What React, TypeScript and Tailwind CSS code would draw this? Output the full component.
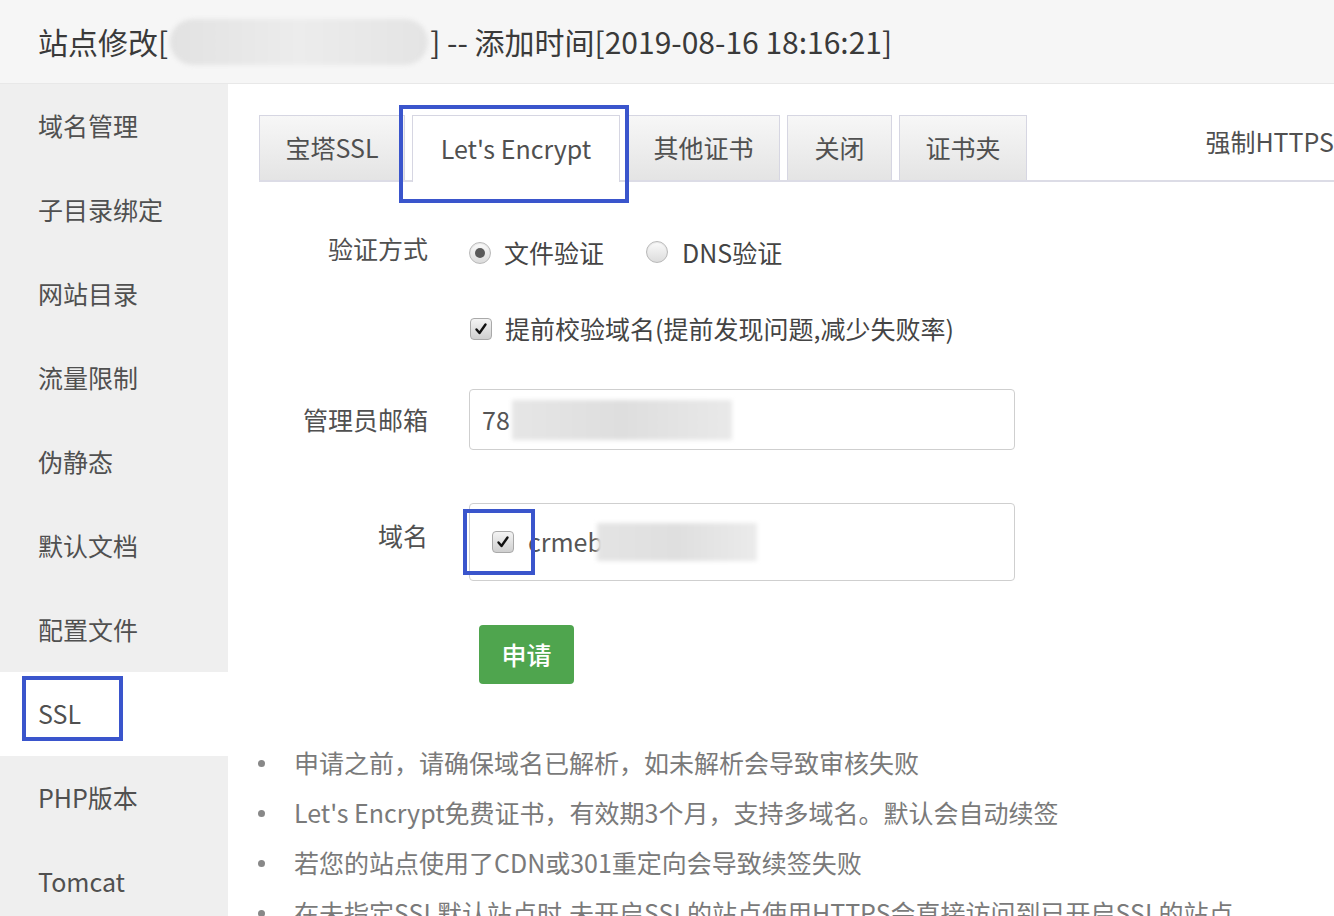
import React from "react";

const font = { fontFamily: '"Noto Sans CJK SC", "Noto Sans", sans-serif' };

function Radio({ checked }: { checked: boolean }) {
  return (
    <span className="relative inline-flex h-[22px] w-[22px] items-center justify-center rounded-full border border-[#b9b9b9] bg-gradient-to-b from-[#fbfbfb] to-[#dcdcdc] shadow-[inset_0_1px_1px_rgba(0,0,0,0.08)]">
      {checked && <span className="h-[10px] w-[10px] rounded-full bg-[#5a5a5a]" />}
    </span>
  );
}

function Check() {
  return (
    <span className="inline-flex h-[22px] w-[22px] items-center justify-center rounded-[4px] border border-[#a9a9a9] bg-gradient-to-b from-[#f4f4f4] to-[#cfcfcf]">
      <svg width="14" height="14" viewBox="0 0 14 14">
        <path d="M2.5 7.5 L5.5 11 L11.5 2.5" fill="none" stroke="#111" strokeWidth="2.4" strokeLinecap="round" strokeLinejoin="round" />
      </svg>
    </span>
  );
}

const sideItems = ["域名管理", "子目录绑定", "网站目录", "流量限制", "伪静态", "默认文档", "配置文件", "SSL", "PHP版本", "Tomcat"];

const tabs = [
  { t: "宝塔SSL", w: "w-[146px]" },
  { t: "Let's Encrypt", w: "w-[208px]", active: true },
  { t: "其他证书", w: "w-[153px]" },
  { t: "关闭", w: "w-[105px]" },
  { t: "证书夹", w: "w-[128px]" },
];

const notes = [
  "申请之前，请确保域名已解析，如未解析会导致审核失败",
  "Let's Encrypt免费证书，有效期3个月，支持多域名。默认会自动续签",
  "若您的站点使用了CDN或301重定向会导致续签失败",
  "在未指定SSL默认站点时,未开启SSL的站点使用HTTPS会直接访问到已开启SSL的站点",
];

export default function App() {
  return (
    <div className="relative h-[916px] w-[1334px] overflow-hidden bg-white" style={font}>
      {/* header */}
      <div className="relative flex h-[84px] items-center border-b border-[#e8e8e8] bg-[#f6f6f6] pl-[38px] text-[30px] text-[#3a3a3a]">
        <span>站点修改[</span>
        <span className="mx-[2px] h-[46px] w-[258px] rounded-[23px] bg-gradient-to-r from-[#e2e2e2] via-[#ececec] to-[#e4e4e4] blur-[2px]" />
        <span>] -- 添加时间[2019-08-16 18:16:21]</span>
      </div>

      <div className="flex h-[832px]">
        {/* sidebar */}
        <div className="w-[228px] shrink-0 bg-[#efefef]">
          {sideItems.map((s) => (
            <div
              key={s}
              className={`flex h-[84px] items-center pl-[38px] text-[25px] text-[#505050] ${s === "SSL" ? "bg-white" : ""}`}
            >
              {s}
            </div>
          ))}
        </div>

        {/* main */}
        <div className="relative flex-1 pl-[31px] pt-[33px]">
          {/* tabs */}
          <div className="flex h-[65px] items-end border-b-2 border-[#dcdce6]">
            {tabs.map((t) => (
              <div
                key={t.t}
                className={`mr-[7px] flex h-[65px] items-center justify-center border border-b-0 border-[#d6d6e2] text-[25px] text-[#505050] ${t.w} ${
                  t.active ? "-mb-[2px] h-[67px] bg-white" : "bg-gradient-to-b from-[#f7f7f7] to-[#e4e4e4]"
                }`}
              >
                {t.t}
              </div>
            ))}
            <div className="ml-auto self-start pt-[6px] text-[25px] text-[#505050] whitespace-nowrap">强制HTTPS</div>
          </div>

          {/* form */}
          <div className="mt-[46px] flex items-start">
            <div className="w-[169px] text-right text-[25px] leading-[40px] text-[#505050]">验证方式</div>
            <div className="ml-[41px] flex h-[50px] items-center text-[25px] text-[#444]">
              <Radio checked />
              <span className="ml-[13px]">文件验证</span>
              <span className="ml-[42px]"><Radio checked={false} /></span>
              <span className="ml-[14px]">DNS验证</span>
            </div>
          </div>

          <div className="mt-[26px] flex items-center">
            <div className="w-[169px]" />
            <div className="ml-[42px] flex h-[50px] items-center text-[25px] text-[#444]">
              <Check />
              <span className="ml-[13px]">提前校验域名(提前发现问题,减少失败率)</span>
            </div>
          </div>

          <div className="mt-[35px] flex items-center">
            <div className="w-[169px] text-right text-[25px] text-[#505050]">管理员邮箱</div>
            <div className="relative ml-[41px] flex h-[61px] w-[546px] items-center rounded-[4px] border border-[#cfcfcf] pl-[12px] text-[25px] text-[#555]">
              <span>78</span>
              <span className="ml-[2px] h-[40px] w-[220px] bg-gradient-to-r from-[#e6e6e6] via-[#dedede] to-[#e9e9e9] blur-[2px]" />
            </div>
          </div>

          <div className="mt-[53px] flex items-start">
            <div className="w-[169px] pt-[12px] text-right text-[25px] leading-[40px] text-[#505050]">域名</div>
            <div className="ml-[41px] flex h-[78px] w-[546px] items-center rounded-[4px] border border-[#cfcfcf] pl-[22px] text-[25px] text-[#555]">
              <Check />
              <span className="ml-[14px]">crmeb</span>
              <span className="-ml-[6px] h-[38px] w-[160px] bg-gradient-to-r from-[#e4e4e4] via-[#dfdfdf] to-[#ebebeb] blur-[2px]" />
            </div>
          </div>

          <div className="mt-[44px] pl-[220px]">
            <button className="flex h-[59px] w-[95px] items-center justify-center rounded-[4px] bg-[#4fa54e] text-[25px] font-medium text-white">
              申请
            </button>
          </div>

          {/* notes */}
          <div className="mt-[54px] text-[25px] text-[#7a7a7a]">
            {notes.map((n) => (
              <div key={n} className="flex h-[50px] items-center whitespace-nowrap">
                <span className="ml-[-1px] h-[7px] w-[7px] rounded-full bg-[#888]" />
                <span className="ml-[29px]">{n}</span>
              </div>
            ))}
          </div>
        </div>
      </div>

      {/* annotation boxes */}
      <div className="pointer-events-none absolute left-[399px] top-[105px] h-[98px] w-[230px] border-[4px] border-[#3a55cc]" />
      <div className="pointer-events-none absolute left-[22px] top-[676px] h-[65px] w-[101px] border-[4px] border-[#3a55cc]" />
      <div className="pointer-events-none absolute left-[463px] top-[509px] h-[66px] w-[72px] border-[4px] border-[#3a55cc]" />
    </div>
  );
}
